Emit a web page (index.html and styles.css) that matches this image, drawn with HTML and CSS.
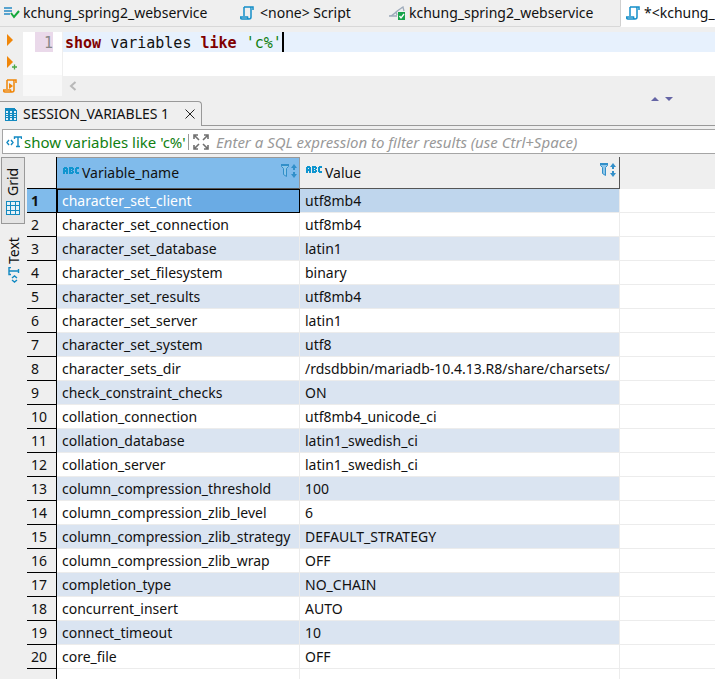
FILE: index.html
```html
<!DOCTYPE html>
<html lang="en">
<head>
<meta charset="utf-8">
<title>SQL Editor</title>
<link rel="stylesheet" href="styles.css">
</head>
<body>
<svg class="defs" aria-hidden="true">
  <symbol id="scroll" viewBox="0 0 14 14"><path d="M4 1h9v3M4 1v9M11 3v8c0 1.500-1 2-2 2H2c-1.200 0-1.500-1-1.500-2H7.500c0 1.500.5 2 1.500 2M4 1h6c1 0 1 1 1 2" fill="none" stroke="currentColor" stroke-width="1.500"/></symbol>
  <symbol id="abc" viewBox="0 0 16 7" shape-rendering="crispEdges"><path d="M1 0h3v1h1v6H3V5H2v2H0V1h1zM2 2v1h1V2zM6 0h4v1h1v2h-1v1h1v2h-1v1H6zM8 2v1h1V2zM8 4v1h1V4zM13 0h3v2h-2v3h2v2h-3V6h-1V1h1z" fill="#0f95cf" fill-rule="evenodd"/></symbol>
  <symbol id="sort" viewBox="0 0 16 15"><path d="M.5.500h7v2l-2 2v8l-3-2v-6l-2-2z" fill="#8fc7ea" stroke="#328fc9"/><path d="M0 1h8" stroke="#328fc9" stroke-width="2"/><path d="M13 0l3 4h-2v2h-2V4h-2zM12 8h2v2h2l-3 4-3-4h2z" fill="#328fc9"/></symbol>
  <symbol id="grid" viewBox="0 0 14 14" shape-rendering="crispEdges"><path d="M0 0h14v14H0z" fill="#138ac0"/><path d="M1 1h3v3H1zM5 1h4v3H5zM10 1h3v3h-3zM1 5h3v4H1zM5 5h4v4H5zM10 5h3v4h-3zM1 10h3v3H1zM5 10h4v3H5zM10 10h3v3h-3z" fill="#e5f1f7"/></symbol>
  <symbol id="sheet" viewBox="0 0 12 13" shape-rendering="crispEdges"><path d="M0 0h10v1h1v1h1v11H0z" fill="#138ac0"/><path d="M1 3h2v2H1zM1 6h2v1H1zM1 8h2v1H1zM1 10h2v2H1zM5 3h2v2H5zM5 6h2v1H5zM5 8h2v1H5zM5 10h2v2H5zM9 3h2v2H9zM9 6h2v1H9zM9 8h2v1H9zM9 10h2v2H9z" fill="#e5f1f7"/></symbol>
  <symbol id="tee" viewBox="0 0 16 12"><path d="M3 4L1 6.500 3 9M5 4l2 2.500L5 9M8.500 3V1h7v2M12 1v9M10 10.500h4" fill="none" stroke="#1289c2" stroke-width="1.400"/></symbol>
</svg>
<div class="app">
  <nav class="tabs" aria-label="Editors">
    <button class="tab first"><svg width="16" height="12" viewBox="0 0 16 12"><path d="M0 1h8M0 4h8M0 7h6" stroke="#268bc5" stroke-width="1.300"/><path d="M7 6l3 4 5-6" fill="none" stroke="#14a83c" stroke-width="2"/></svg>kchung_spring2_webservice</button>
    <button class="tab second"><svg class="script" width="14" height="14"><use href="#scroll"/></svg>&lt;none&gt; Script</button>
    <button class="tab third"><svg width="17" height="14" viewBox="0 0 17 14"><path d="M0 10c4 0 5-2 7-4s4-3 7-5l1 4M2 10h6M7 6l1 3" fill="none" stroke="#9eabbb" stroke-width="1.300"/><path d="M9 6h7v8H9z" fill="#17a34a"/><path d="M10.500 10l1.500 2 3-4" fill="none" stroke="#fff" stroke-width="1.300"/></svg>kchung_spring2_webservice</button>
    <button class="tab active"><svg class="script" width="14" height="14"><use href="#scroll"/></svg>*&lt;kchung_</button>
  </nav>
  <section class="editor">
    <div class="tools">
      <button aria-label="Execute"><svg width="16" height="14" viewBox="0 0 16 14"><path d="M4 1l6 6-6 6z" fill="#f08609"/></svg></button>
      <button aria-label="Execute in new tab"><svg width="16" height="14" viewBox="0 0 16 14"><path d="M4 0l6 6-6 6z" fill="#f08609"/><path d="M9 11h5M11.500 8.500v5" stroke="#4aa845" stroke-width="1.300"/></svg></button>
      <button aria-label="Execute script"><svg class="run" width="14" height="14"><use href="#scroll"/><path d="M6 4l4 3-4 3z" fill="currentColor"/></svg></button>
    </div>
    <div class="gutter"><span class="number">1</span><span class="foot"></span></div>
    <div class="source">
      <div class="code" role="textbox" aria-label="SQL" contenteditable="true" spellcheck="false"><span><b>show</b> variables <b>like</b> <i>'c%'</i></span><span class="caret"></span></div>
      <div class="scrollbar"><svg width="8" height="10" viewBox="0 0 8 10"><path d="M6.500 1L2 5l4.500 4" fill="none" stroke="#b8b8b8" stroke-width="2"/></svg></div>
    </div>
  </section>
  <div class="results-head">
    <div class="result-tab"><svg width="12" height="13"><use href="#sheet"/></svg><span>SESSION_VARIABLES 1</span><button aria-label="Close"><svg width="10" height="10" viewBox="0 0 10 10"><path d="M.5.500l9 9M9.500.500l-9 9" stroke="#222"/></svg></button></div>
    <div class="rest"><svg width="22" height="4" viewBox="0 0 22 4"><path d="M0 4l4-4 4 4zM14 0h8l-4 4z" fill="#6565a5"/></svg></div>
  </div>
  <div class="filter">
    <svg width="16" height="12"><use href="#tee"/></svg>
    <label for="expr">show variables like 'c%'</label>
    <svg class="expand" width="16" height="16" viewBox="0 0 16 16"><path d="M1 5V1h4M1 1l5 5M11 1h4v4M15 1l-5 5M1 11v4h4M1 15l5-5M11 15h4v-4M15 15l-5-5" fill="none" stroke="#707070" stroke-width="1.600"/></svg>
    <input id="expr" type="text" placeholder="Enter a SQL expression to filter results (use Ctrl+Space)">
  </div>
  <main class="results">
    <div class="views">
      <button class="view selected"><svg width="14" height="14"><use href="#grid"/></svg>Grid</button>
      <button class="view"><svg class="tee" width="12" height="16" viewBox="0 0 12 16"><path d="M4 13L6.500 15 9 13M4 11l2.500-2L9 11M3 7.500H1v-7h2M1 4h9M10.500 2v4" fill="none" stroke="#1289c2" stroke-width="1.400"/></svg>Text</button>
    </div>
    <div class="data">
      <table>
        <colgroup><col class="c-num"><col class="c-name"><col class="c-value"><col></colgroup>
        <thead><tr><td></td>
          <th class="sorted"><div class="head"><svg width="16" height="7"><use href="#abc"/></svg><span>Variable_name</span><svg class="sort" width="16" height="15"><use href="#sort"/></svg></div></th>
          <th class="value"><div class="head"><svg width="16" height="7"><use href="#abc"/></svg><span>Value</span><svg class="sort" width="16" height="15"><use href="#sort"/></svg></div></th>
          <td></td></tr></thead>
        <tbody>
          <tr class="current"><th>1</th><td>character_set_client</td><td>utf8mb4</td><td></td></tr>
          <tr><th>2</th><td>character_set_connection</td><td>utf8mb4</td><td></td></tr>
          <tr><th>3</th><td>character_set_database</td><td>latin1</td><td></td></tr>
          <tr><th>4</th><td>character_set_filesystem</td><td>binary</td><td></td></tr>
          <tr><th>5</th><td>character_set_results</td><td>utf8mb4</td><td></td></tr>
          <tr><th>6</th><td>character_set_server</td><td>latin1</td><td></td></tr>
          <tr><th>7</th><td>character_set_system</td><td>utf8</td><td></td></tr>
          <tr><th>8</th><td>character_sets_dir</td><td>/rdsdbbin/mariadb-10.4.13.R8/share/charsets/</td><td></td></tr>
          <tr><th>9</th><td>check_constraint_checks</td><td>ON</td><td></td></tr>
          <tr><th>10</th><td>collation_connection</td><td>utf8mb4_unicode_ci</td><td></td></tr>
          <tr><th>11</th><td>collation_database</td><td>latin1_swedish_ci</td><td></td></tr>
          <tr><th>12</th><td>collation_server</td><td>latin1_swedish_ci</td><td></td></tr>
          <tr><th>13</th><td>column_compression_threshold</td><td>100</td><td></td></tr>
          <tr><th>14</th><td>column_compression_zlib_level</td><td>6</td><td></td></tr>
          <tr><th>15</th><td>column_compression_zlib_strategy</td><td>DEFAULT_STRATEGY</td><td></td></tr>
          <tr><th>16</th><td>column_compression_zlib_wrap</td><td>OFF</td><td></td></tr>
          <tr><th>17</th><td>completion_type</td><td>NO_CHAIN</td><td></td></tr>
          <tr><th>18</th><td>concurrent_insert</td><td>AUTO</td><td></td></tr>
          <tr><th>19</th><td>connect_timeout</td><td>10</td><td></td></tr>
          <tr><th>20</th><td>core_file</td><td>OFF</td><td></td></tr>
        </tbody>
      </table>
      <div class="blank"></div>
    </div>
  </main>
</div>
</body>
</html>
```
FILE: styles.css
```css
* { box-sizing: border-box; }
body {
  margin: 0;
  overflow: hidden;
  background: #efefef;
  color: #111;
  font: 14px/20px "Noto Sans", "Open Sans", sans-serif;
}
button { padding: 0; border: 0; background: none; color: inherit; font: inherit; }
svg { flex: none; display: block; }
.defs { position: absolute; width: 0; height: 0; }
.app { display: flex; flex-direction: column; min-height: 100vh; }

.tabs { display: flex; height: 27px; overflow: hidden; }
.tab {
  display: flex; flex: none; align-items: center; gap: 3px;
  border-bottom: 1px solid #d8d8d8;
  white-space: nowrap;
}
.first { width: 240px; padding-left: 4px; }
.second { width: 149px; gap: 6px; }
.third { flex: 1 0 230px; }
.active { width: 95px; padding-left: 5px; gap: 4px; background: #fff; border-color: #fff; border-left: 1px solid #d0d0d0; }
.script { color: #148fc9; }

.editor { display: flex; margin-top: 5px; }
.tools { display: flex; flex-direction: column; gap: 9px; width: 23px; padding: 1px 0 0 3px; }
.run { color: #f08609; }
.gutter { display: flex; flex-direction: column; width: 39px; margin-right: 1px; background: #fff; }
.number {
  width: 18px; height: 20px; margin: 0 0 23px 12px;
  background: #ead9ea; color: #888;
  font: 15px/22px "DejaVu Sans Mono", monospace; text-align: right;
}
.foot { height: 21px; background: #f8f8f8; }
.source { flex: 1; min-width: 0; }
.code {
  display: flex; height: 44px; padding-left: 2px;
  background: linear-gradient(#e7f1fd 20px, #fff 20px);
  font: 15px/22px "DejaVu Sans Mono", monospace; white-space: pre;
}
.code b { color: #800000; }
.code i { color: #108010; font-style: normal; }
.caret { width: 2px; height: 20px; background: #000; }
.scrollbar { padding: 5px 6px; }

.results-head { display: flex; height: 25px; margin-top: 5px; }
.result-tab {
  display: flex; align-items: center; gap: 6px;
  width: 202px; padding-left: 5px;
  border-top: 1px solid #999; border-right: 1px solid #999;
  border-radius: 0 4px 0 0;
}
.result-tab button { margin-left: auto; padding-right: 6px; }
.rest { flex: 1; display: flex; justify-content: flex-end; padding-right: 42px; border-bottom: 1px solid #999; }
.rest svg { margin-top: -4px; }

.filter {
  display: flex; align-items: center;
  height: 25px; margin: 3px 0 0 2px; padding-left: 3px;
  border: 1px solid #a5a5a5; border-right: 0; background: #fff;
  font-size: 15px;
}
.filter label { width: 164px; margin-left: 2px; color: #108010; white-space: nowrap; }
.expand { box-sizing: content-box; padding-left: 4px; border-left: 1px solid #999; }
.filter input {
  flex: 1; min-width: 0; height: 22px; margin-left: 7px; padding: 0;
  border: 0; outline: 0; background: none; font: inherit; font-style: italic;
}
.filter input::placeholder { color: #999; opacity: 1; }

.results { flex: 1; display: flex; margin-top: 3px; }
.views { width: 26px; padding-left: 1px; }
.view {
  display: flex; align-items: center; gap: 5px;
  width: 24px; height: 67px; padding: 8px 4px;
  writing-mode: vertical-rl; transform: rotate(180deg);
}
.view .tee { transform: rotate(180deg); }
.view:not(.selected) { height: 61px; padding-right: 6px; gap: 3px; padding-bottom: 2px; padding-top: 2px; }
.view.selected { border: 1px solid #999; background: #e4e4e4; }

.data { flex: 1; min-width: 0; display: flex; flex-direction: column; padding-left: 1px; }
table { width: 100%; border-collapse: separate; border-spacing: 0; table-layout: fixed; }
.c-num { width: 30px; }
.c-name { width: 243px; }
.c-value { width: 320px; }
th, td { padding: 0; text-align: left; font-weight: 400; white-space: nowrap; }
thead { height: 32px; }
thead td:first-child { border-right: 1px solid #000; border-bottom: 1px solid #000; }
.sorted { border: 1px solid #999; border-bottom-color: #555; border-left: 0; background: #80bbeb; }
.value { border-right: 1px solid #555; border-bottom: 1px solid #555; }
.head { display: flex; align-items: center; gap: 3px; padding: 0 2px 0 6px; }
.head > svg:first-child { margin-bottom: 6px; }
.sort { margin: 0 0 4px auto; }
.value .sort { margin-right: 1px; }
tbody tr { height: 24px; }
tbody td { padding-left: 5px; border-right: 1px solid #ececec; border-bottom: 1px solid #ececec; background: #fff; }
tbody td:last-child { border-right: 0; }
tbody tr:nth-child(odd) td:not(:last-child) { background: #dae4f1; }
tbody th { padding-left: 4px; border-right: 1px solid #000; border-bottom: 1px solid #000; }
tbody tr.current th { background: #80bbeb; font-weight: 700; }
tbody tr.current td:nth-child(2) { padding-left: 4px; border: 1px solid #000; background: #6aabe4; color: #fff; }
tbody tr.current td:nth-child(3) { background: #bfd6ed; }
.blank { flex: 1; margin-left: 29px; border-left: 1px solid #000; background: linear-gradient(90deg, #fff 242px, #ececec 242px, #ececec 243px, #fff 243px, #fff 562px, #ececec 562px, #ececec 563px, #fff 563px); }
```
